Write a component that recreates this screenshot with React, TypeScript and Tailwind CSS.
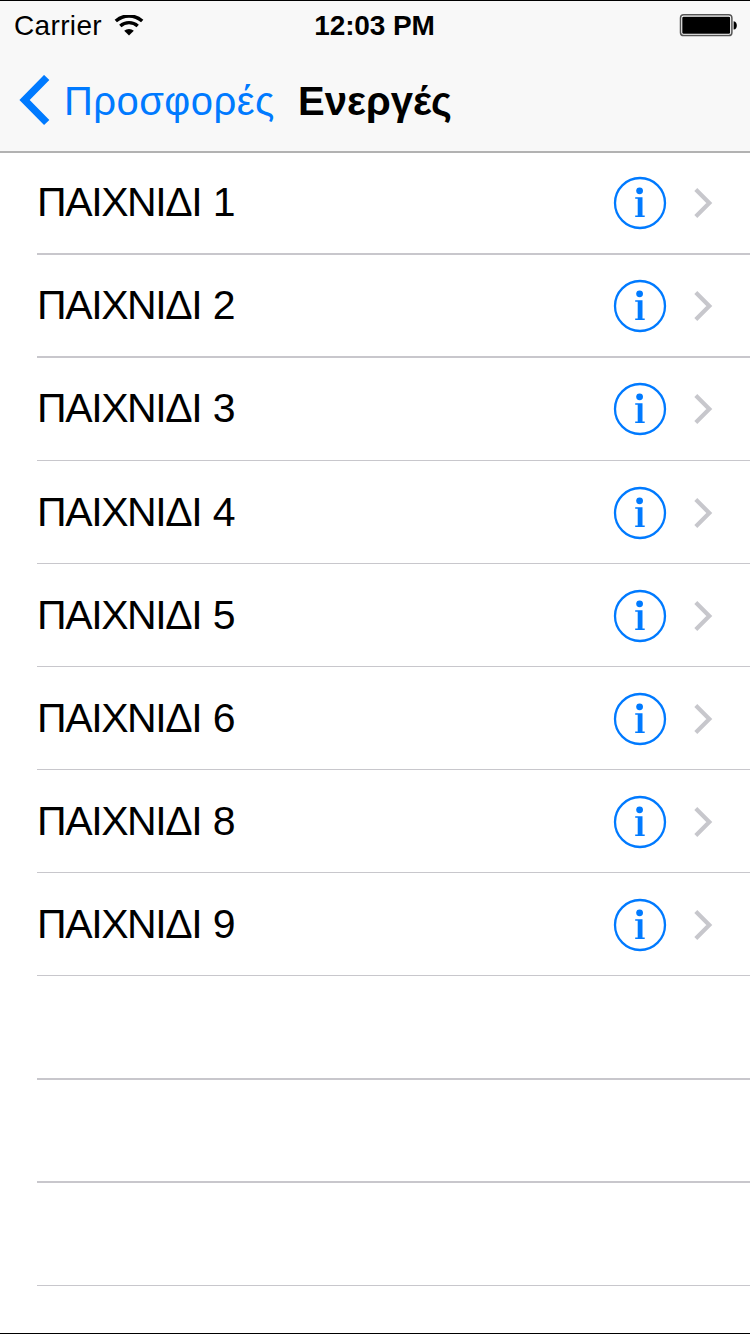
const rows: { label: string; height: string; line: string }[] = [
  { label: 'ΠΑΙΧΝΙΔΙ 1', height: 'h-[102px]', line: 'border-b-2' },
  { label: 'ΠΑΙΧΝΙΔΙ 2', height: 'h-[103px]', line: 'border-b-2' },
  { label: 'ΠΑΙΧΝΙΔΙ 3', height: 'h-[103px]', line: 'border-b' },
  { label: 'ΠΑΙΧΝΙΔΙ 4', height: 'h-[103px] pt-px', line: 'border-b' },
  { label: 'ΠΑΙΧΝΙΔΙ 5', height: 'h-[103px] pt-px', line: 'border-b' },
  { label: 'ΠΑΙΧΝΙΔΙ 6', height: 'h-[103px] pt-px', line: 'border-b' },
  { label: 'ΠΑΙΧΝΙΔΙ 8', height: 'h-[103px] pt-px', line: 'border-b' },
  { label: 'ΠΑΙΧΝΙΔΙ 9', height: 'h-[103px] pt-[2px]', line: 'border-b' },
  { label: '', height: 'h-[104px]', line: 'border-b-2' },
  { label: '', height: 'h-[103px]', line: 'border-b-2' },
  { label: '', height: 'h-[103px]', line: 'border-b' },
];

function StatusBar() {
  return (
    <div className="flex h-[50px] items-center text-[28px] leading-[30px]">
      <div className="flex flex-1 items-center pl-[14px]">
        <span className="w-[88px] tracking-[0.35px]">Carrier</span>
        <svg className="ml-[12px] h-[22px] w-[30px]" viewBox="0 0 30 22" fill="none" stroke="#000" strokeWidth="3.4">
          <path d="M1.8 6.1a19.5 19.5 0 0 1 26.4 0" />
          <path d="M6.3 11a13 13 0 0 1 17.4 0" />
          <path d="M10.2 15.8a7 7 0 0 1 9.6 0L15 20.6z" fill="#000" stroke="none" />
        </svg>
      </div>
      <span className="mr-[3px] font-bold tracking-[-0.1px]">12:03 PM</span>
      <div className="flex flex-1 justify-end pr-[12px]">
        <svg className="h-[24px] w-[59px]" viewBox="0 0 59 24">
          <rect x="1.5" y="0.8" width="51.4" height="20.8" rx="3.2" fill="#fff" stroke="#555" strokeWidth="1.5" />
          <rect x="3.3" y="2.7" width="47.8" height="17" rx="1.2" />
          <path d="M54.6 7.2c2.4.3 3.2 2 3.2 4.2s-.8 3.9-3.2 4.2z" />
        </svg>
      </div>
    </div>
  );
}

function InfoIcon() {
  return (
    <svg className="h-[54px] w-[54px]" viewBox="0 0 54 54">
      <circle cx="27" cy="27" r="25" fill="none" stroke="#007aff" strokeWidth="2.3" />
      <circle cx="26.6" cy="14.8" r="3.4" fill="#007aff" />
      <path d="M22.2 21.3h7.3v18.3h2.2v1.5h-9.5v-1.5h2.5V22.8h-2.5z" fill="#007aff" />
    </svg>
  );
}

export default function App() {
  return (
    <div className="flex h-[1334px] w-[750px] flex-col overflow-hidden border-y border-black bg-white font-['Liberation_Sans',sans-serif] text-black">
      <header className="flex h-[152px] shrink-0 flex-col border-b-2 border-[#b2b2b2] bg-[#f8f8f8]">
        <StatusBar />
        <div className="flex h-[100px] items-center text-[40px] leading-[46px]">
          <svg className="ml-[18px] h-[52px] w-[32px]" viewBox="0 0 32 52" fill="none" stroke="#007aff" strokeWidth="7.4">
            <path d="M28.7 2.5 6.6 25l22.1 22.5" />
          </svg>
          <span className="ml-[14px] w-[234px] pb-px tracking-[0.45px] text-[#007aff]">Προσφορές</span>
          <span className="pb-px font-bold">Ενεργές</span>
        </div>
      </header>
      <main className="flex flex-col">
        {rows.map((row, i) => (
          <div key={i} className={`ml-[37px] flex shrink-0 items-center border-[#c8c7cc] ${row.height} ${row.line}`}>
            {row.label && (
              <>
                <span className="flex-1 pb-[2px] text-[41px] leading-[46px] tracking-[-1.4px] [word-spacing:1.5px]">{row.label}</span>
                <InfoIcon />
                <svg className="mr-[36px] ml-[26px] h-[32px] w-[21px]" viewBox="0 0 21 32" fill="none" stroke="#c7c7cc" strokeWidth="4.2">
                  <path d="M2.8 2.5 16.3 16 2.8 29.5" />
                </svg>
              </>
            )}
          </div>
        ))}
      </main>
    </div>
  );
}
